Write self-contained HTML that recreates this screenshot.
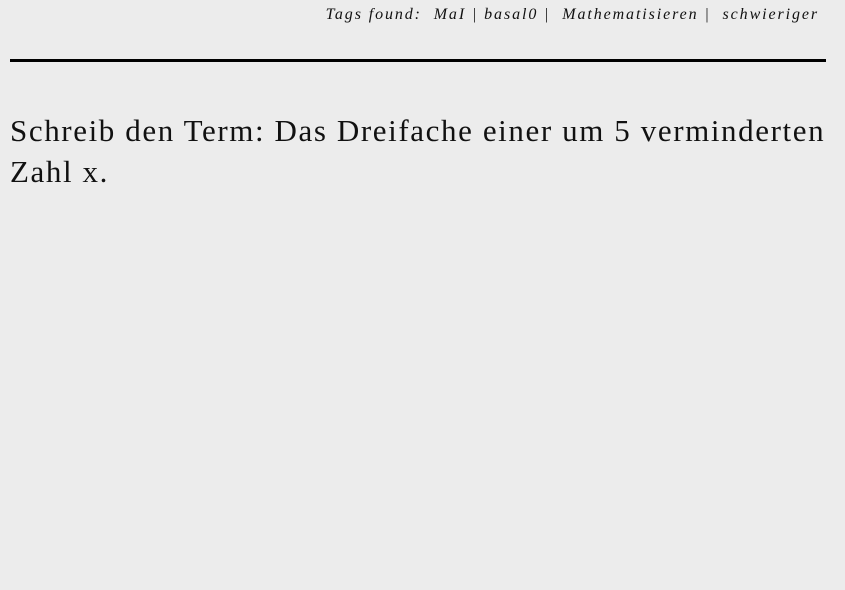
<!DOCTYPE html>
<html><head><meta charset="utf-8"><style>
html,body{margin:0;padding:0;background:#ececec;width:845px;height:590px;overflow:hidden}
body{font-family:"Liberation Serif",serif;color:#111;position:relative}
.tags{position:absolute;top:6px;right:26px;font-style:italic;font-size:16px;letter-spacing:1.9px;white-space:nowrap}
.rule{position:absolute;left:10px;top:59px;width:816px;height:3px;background:#000}
.t{position:absolute;left:10px;font-size:31px;white-space:nowrap;letter-spacing:1.6px}
</style></head><body>
<div class="tags">Tags found: &nbsp;MaI | basal0 | &nbsp;Mathematisieren | &nbsp;schwieriger</div>
<div class="rule"></div>
<div class="t" style="top:113px">Schreib den Term: Das Dreifache einer um 5 verminderten</div>
<div class="t" style="top:154px">Zahl x.</div>
</body></html>
